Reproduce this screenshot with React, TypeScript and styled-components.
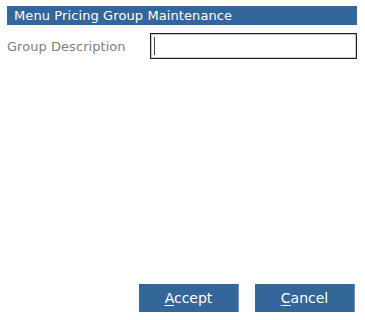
import styled, { createGlobalStyle } from 'styled-components';

const GlobalStyle = createGlobalStyle`
  html, body {
    margin: 0;
    padding: 0;
    background: #fff;
  }
  body {
    font-family: 'DejaVu Sans', 'Liberation Sans', sans-serif;
  }
`;

const Page = styled.div`
  box-sizing: border-box;
  width: 365px;
  height: 320px;
  padding: 6px 8px 8px 7px;
  display: flex;
  flex-direction: column;
`;

const TitleBar = styled.div`
  height: 19px;
  background: #336699;
  color: #fff;
  font-size: 13px;
  line-height: 19px;
  padding-left: 7px;
  letter-spacing: 0.1px;
`;

const FieldRow = styled.div`
  display: flex;
  align-items: center;
  margin-top: 8px;
`;

const Label = styled.label`
  width: 143px;
  color: #808080;
  font-size: 13px;
  letter-spacing: 0.05px;
`;

const InputWrap = styled.div`
  position: relative;
  width: 207px;
  height: 26px;

  &::after {
    content: '';
    position: absolute;
    left: 4px;
    top: 4px;
    width: 1px;
    height: 18px;
    background: #444;
    pointer-events: none;
  }
`;

const TextBox = styled.input`
  box-sizing: border-box;
  width: 100%;
  height: 100%;
  border: 1px solid #1e1e1e;
  box-shadow: inset 0 0 0 1px #c8c8c8;
  outline: none;
  padding: 0 4px;
  font-family: inherit;
  font-size: 13px;
  caret-color: transparent;
`;

const Footer = styled.div`
  margin-top: auto;
  display: flex;
  justify-content: flex-end;
  gap: 16px;
  padding-right: 2px;
`;

const Button = styled.button`
  box-sizing: border-box;
  width: 100px;
  height: 28px;
  background: #336699;
  border: none;
  border-right: 1px solid #6f93b8;
  color: #fff;
  font-family: inherit;
  font-size: 14px;
  padding: 0;
  cursor: pointer;

  u {
    text-decoration: underline;
    text-underline-offset: 2px;
  }
`;

export default function App() {
  return (
    <>
      <GlobalStyle />
      <Page>
        <TitleBar>Menu Pricing Group Maintenance</TitleBar>
        <FieldRow>
          <Label htmlFor="groupDesc">Group Description</Label>
          <InputWrap>
            <TextBox id="groupDesc" />
          </InputWrap>
        </FieldRow>
        <Footer>
          <Button>
            <u>A</u>ccept
          </Button>
          <Button>
            <u>C</u>ancel
          </Button>
        </Footer>
      </Page>
    </>
  );
}
